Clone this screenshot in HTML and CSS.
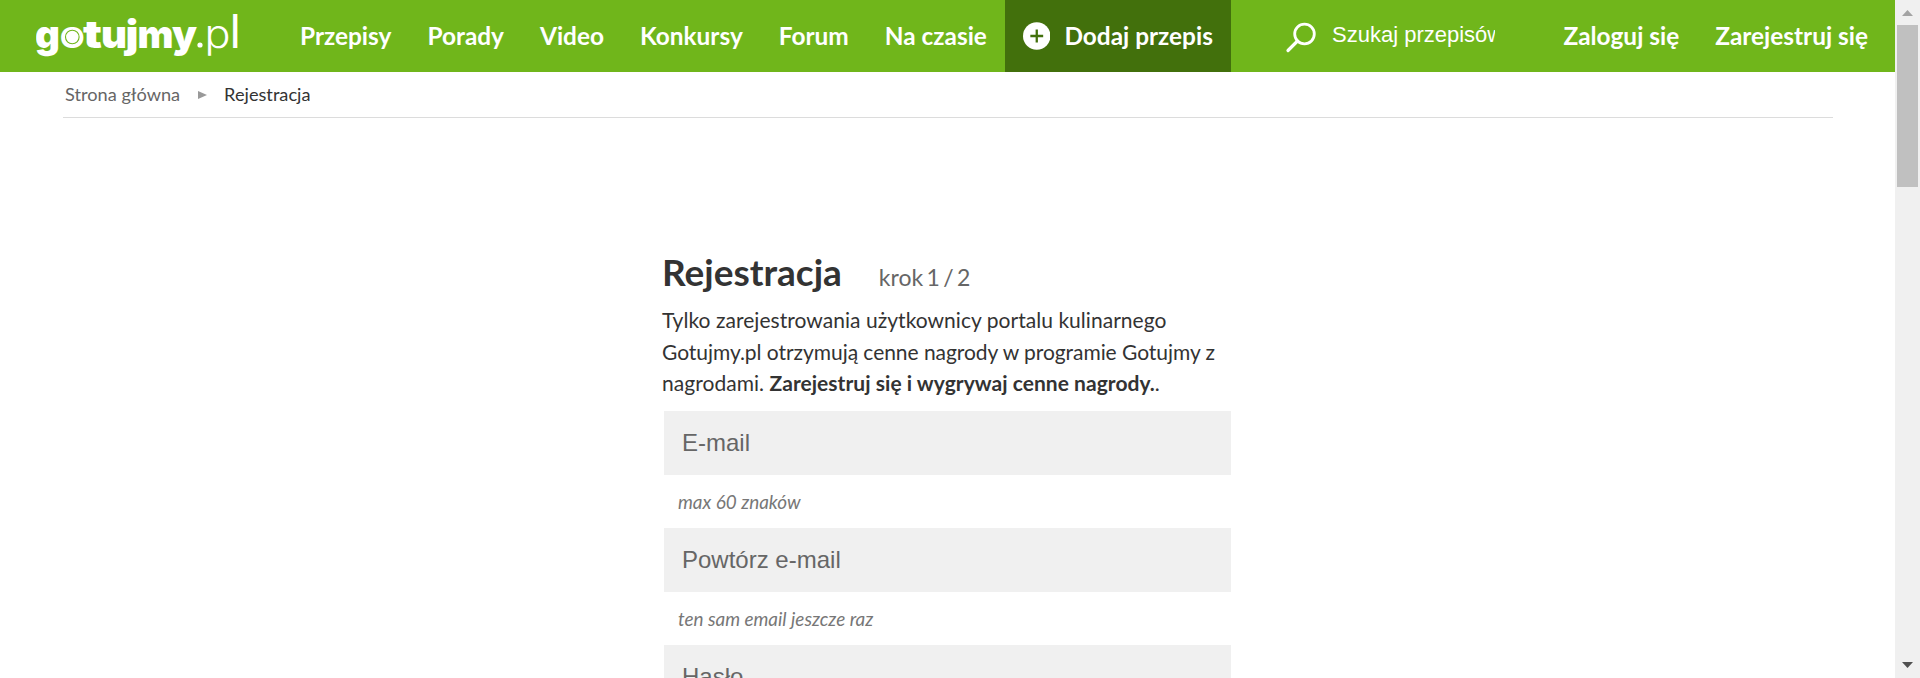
FILE: index.html
```html
<!DOCTYPE html>
<html lang="pl">
<head>
<meta charset="utf-8">
<title>Rejestracja - gotujmy.pl</title>
<link rel="stylesheet" href="styles.css">
</head>
<body>
<div class="page">
  <header class="topbar">
    <a class="logo">
      <svg width="210" height="72" viewBox="0 0 210 72" fill="#fff">
        <g class="logo-bold">
          <text x="-1" y="47.5" textLength="25" lengthAdjust="spacingAndGlyphs">g</text>
          <text x="24" y="47.5" textLength="24.5" lengthAdjust="spacingAndGlyphs">o</text>
          <text x="47" y="47.5" textLength="19" lengthAdjust="spacingAndGlyphs">t</text>
          <text x="65" y="47.5" textLength="26" lengthAdjust="spacingAndGlyphs">u</text>
          <text x="89.5" y="47.5" textLength="13" lengthAdjust="spacingAndGlyphs">j</text>
          <text x="101.500" y="47.5" textLength="36" lengthAdjust="spacingAndGlyphs">m</text>
          <text x="136" y="47.5" textLength="25" lengthAdjust="spacingAndGlyphs">y</text>
        </g>
        <circle cx="36.300" cy="37" r="9" fill="#fff"/>
        <circle cx="36.300" cy="37" r="6.800" fill="none" stroke="#70b61b" stroke-width="1.100"/>
        <circle cx="164" cy="45" r="2.600"/>
        <text class="logo-thin" x="168.500" y="47.500" textLength="26" lengthAdjust="spacingAndGlyphs">p</text>
        <text class="logo-l" x="193.500" y="47.500">l</text>
      </svg>
    </a>
    <nav class="menu">
      <a>Przepisy</a><a>Porady</a><a>Video</a><a>Konkursy</a><a>Forum</a><a>Na czasie</a>
      <a class="add">
        <svg width="30" height="30" viewBox="0 0 30 30"><circle cx="15" cy="15" r="15" fill="#fff"/><path d="M15 8v14M8 15h14" stroke="#42700c" stroke-width="2.500"/></svg>
        <span>Dodaj przepis</span>
      </a>
    </nav>
    <div class="search">
      <svg width="32" height="32" viewBox="0 0 32 32" fill="none" stroke="#fff"><circle cx="19.500" cy="12" r="9.800" stroke-width="2.800"/><path d="M12.500 19L3 28.500" stroke-width="3.200" stroke-linecap="round"/></svg>
      <input type="text" placeholder="Szukaj przepisów">
    </div>
    <div class="account"><a>Zaloguj się</a><a>Zarejestruj się</a></div>
  </header>
  <div class="crumbs">
    <a>Strona główna</a>
    <svg width="9" height="8" viewBox="0 0 9 8"><path d="M0 0L9 4L0 8z" fill="#999"/></svg>
    <span>Rejestracja</span>
  </div>
  <main class="register">
    <div class="heading"><h1>Rejestracja</h1><span>krok 1 / 2</span></div>
    <p class="intro">Tylko zarejestrowania użytkownicy portalu kulinarnego<br><span class="tight">Gotujmy.pl otrzymują cenne nagrody w programie Gotujmy z</span><br>nagrodami. <strong>Zarejestruj się i wygrywaj cenne nagrody.</strong>.</p>
    <input class="field" type="text" placeholder="E-mail">
    <p class="hint">max 60 znaków</p>
    <input class="field" type="text" placeholder="Powtórz e-mail">
    <p class="hint">ten sam email jeszcze raz</p>
    <input class="field" type="text" placeholder="Hasło">
  </main>
</div>
<aside class="scrollbar">
  <svg width="25" height="25" viewBox="0 0 25 25"><path d="M7 16L12.500 10L18 16z" fill="#a3a3a3"/></svg>
  <div class="thumb"></div>
  <svg class="down" width="25" height="25" viewBox="0 0 25 25"><path d="M7 9L12.500 15L18 9z" fill="#505050"/></svg>
</aside>
</body>
</html>
```
FILE: styles.css
```css
* { box-sizing: border-box; }
body {
  margin: 0;
  height: 678px;
  display: flex;
  overflow: hidden;
  background: #fff;
  color: #333;
  font-family: Lato, "Liberation Sans", sans-serif;
}
.page { width: 1895px; height: 678px; overflow: hidden; }
.topbar {
  height: 72px;
  display: flex;
  background: #70b61b;
  color: #fff;
  font-size: 24.4px;
  font-weight: 700;
  line-height: 72px;
  white-space: nowrap;
}
.logo { width: 246px; margin-right: 36px; padding-left: 36px; }
.logo svg { display: block; }
.logo-bold { font: 900 39px Inter, sans-serif; }
.logo-thin { font: 300 39px Inter, sans-serif; }
.logo-l { font: 400 47px Inter, sans-serif; }
.menu { width: 948px; display: flex; }
.menu a { padding: 0 18px; }
.menu .add {
  width: 226px;
  margin-left: auto;
  display: flex;
  align-items: center;
  gap: 14px;
  background: #42700c;
}
.search { width: 211px; margin-left: 55px; display: flex; align-items: flex-start; }
.search svg { margin-top: 22px; flex: none; }
.search input {
  width: 163px;
  height: 32px;
  margin: 19px 0 0 15px;
  padding: 0;
  border: 0;
  background: none;
  font: 22px "Liberation Sans", Arial, sans-serif;
}
.search input::placeholder { color: #fff; opacity: 1; }
.account { margin-left: auto; padding-right: 27px; display: flex; gap: 36px; }
.crumbs {
  height: 46px;
  margin: 0 62px 0 63px;
  padding: 0 0 2px 2px;
  display: flex;
  align-items: center;
  gap: 17.5px;
  border-bottom: 1px solid #dcdcdc;
  font-size: 18.2px;
}
.crumbs a { color: #666; }
.crumbs svg { margin-top: 2px; }
.register { width: 569px; margin: 129px 0 0 662px; }
.heading { height: 50px; display: flex; align-items: baseline; gap: 37px; }
.heading h1 { margin: 0; font-size: 37px; line-height: 50px; }
.heading span { font-size: 23px; word-spacing: -2.5px; color: #666; }
.intro { margin: 7px 0 0; font-size: 21px; line-height: 31.5px; letter-spacing: 0.04px; white-space: nowrap; }
.intro .tight { letter-spacing: -0.05px; }
.field {
  display: block;
  width: 567px;
  height: 64px;
  margin: 12px 0 0 2px;
  padding: 0 18px;
  border: 0;
  background: #f0f0f0;
  font: 24px "Liberation Sans", Arial, sans-serif;
}
.field::placeholder { color: #666; opacity: 1; }
.hint { height: 53px; margin: 0; padding-left: 16px; font-size: 18.9px; line-height: 53px; font-style: italic; color: #777; }
.hint + .field { margin-top: 0; }
.scrollbar { width: 25px; height: 678px; display: flex; flex-direction: column; background: #f0f0f0; }
.thumb { width: 21px; height: 162px; margin-left: 2px; background: #c0c0c0; }
.scrollbar .down { margin-top: auto; }
```
